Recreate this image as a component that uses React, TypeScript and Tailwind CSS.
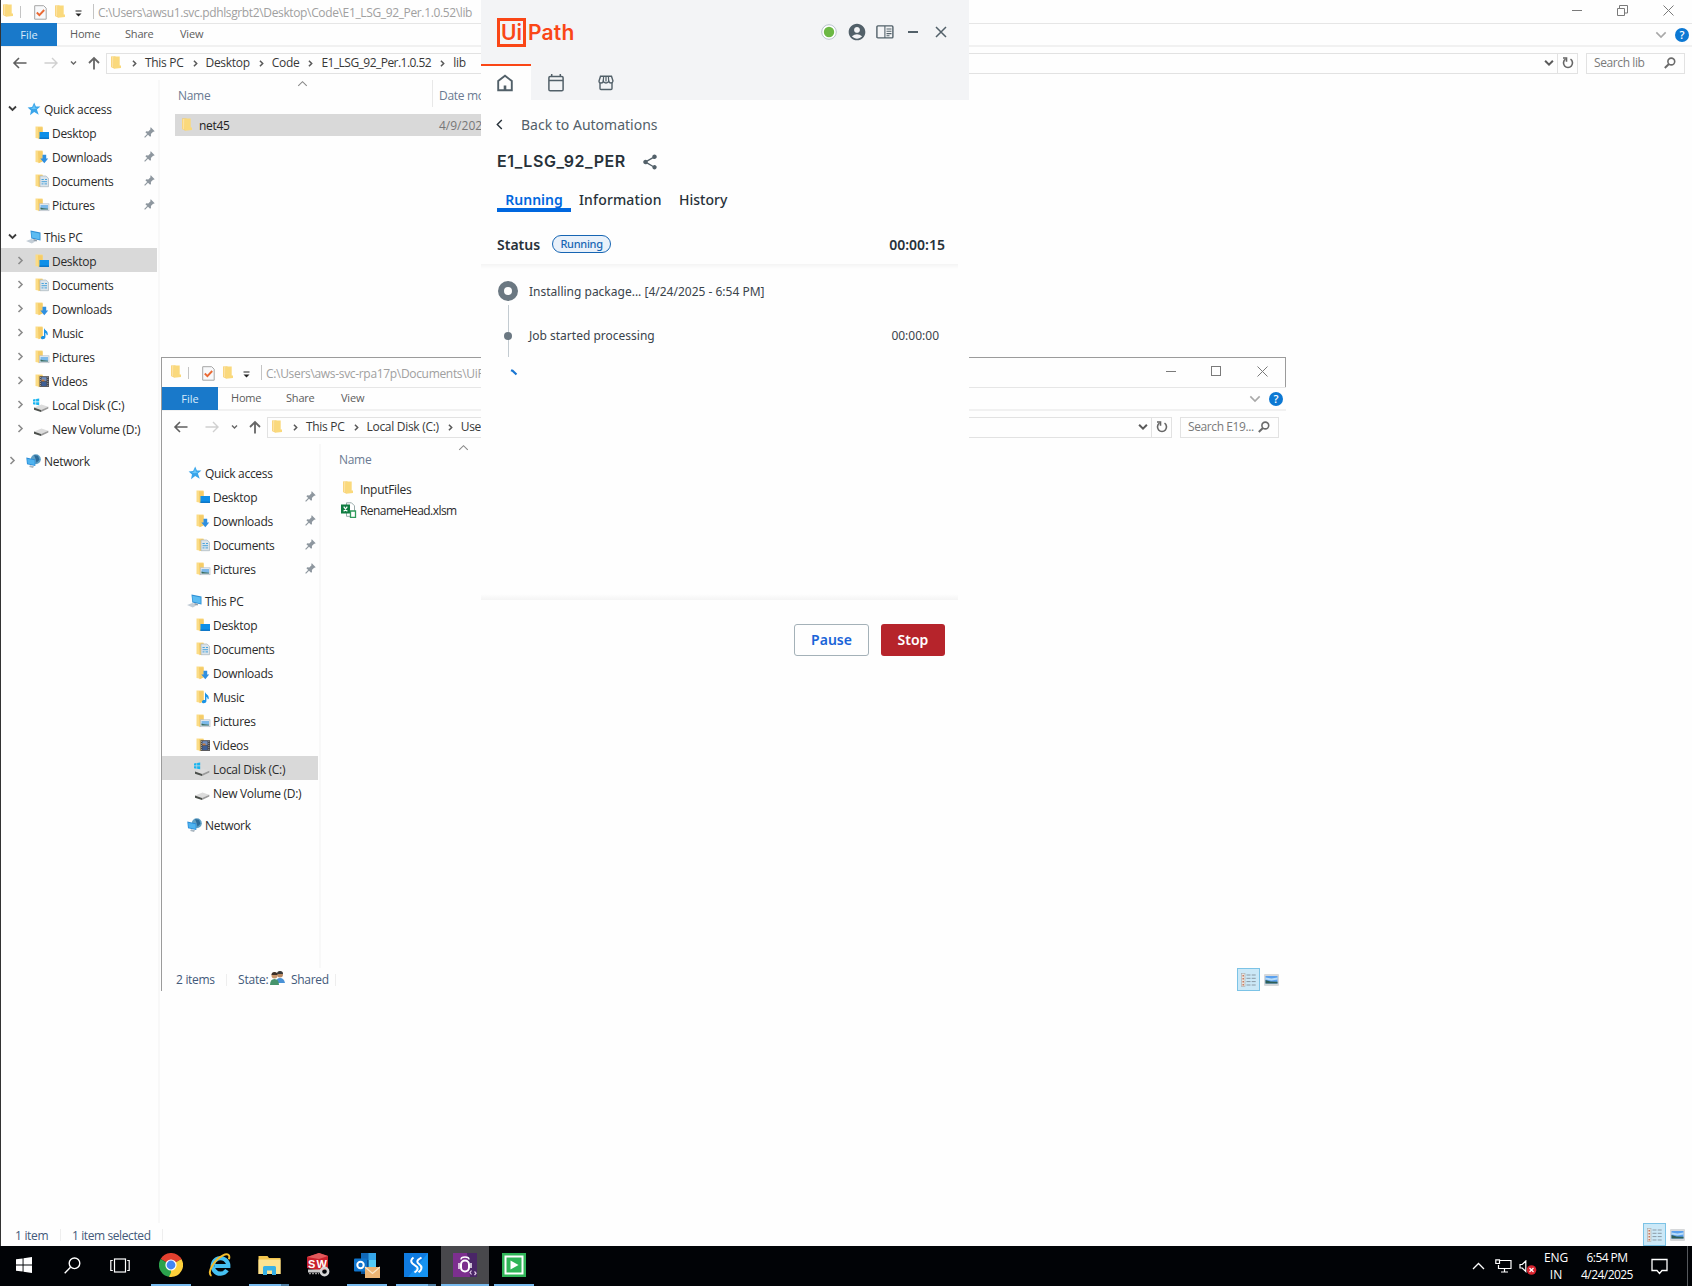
import React from "react";
import { MdAccountCircle, MdShare } from "react-icons/md";

type Kind =
  | "star" | "pc" | "net" | "desktop" | "downloads" | "documents"
  | "pictures" | "music" | "videos" | "disk" | "drive";

function Folder({ className = "" }: { className?: string }) {
  return (
    <svg width="10" height="13" viewBox="0 0 10 13" className={"shrink-0 " + className}>
      <path d="M0 .5h4.500v10.500L3 12.500 0 11z" fill="#f4c75e" />
      <path d="M2.500 .6h6.200v9H10V12l-7 .7z" fill="#fad97c" />
      <path d="M.5 1h2v11l-2-1z" fill="#fde3a0" />
    </svg>
  );
}

function NavIcon({ kind }: { kind: Kind }) {
  const base = (
    <>
      <path d="M.5.5h7v10.300l-3 1.900-4-.7z" fill="#fbdc86" />
      <path d="M3 1.200h4.700v10.300L3.500 13.200z" fill="#f5cc68" />
    </>
  );
  return (
    <svg width="16" height="14" viewBox="0 0 16 14" className="shrink-0">
      {kind === "star" && (
        <>
          <path d="M8.200.4l1.700 4.200 4.500-.2-3.500 3.100 1.800 5.300-4.500-2.700-4.200 3.200 1-4.900L1.600 5.600l4.500-.7z" fill="#3aa5ea" />
          <path d="M8 2.500l1 3.200 3.200.2-4.400 1.300-3-.7 2.400-.9z" fill="#6cc8f8" />
        </>
      )}
      {kind === "pc" && (
        <>
          <path d="M4.500.5L14.500 2.600v8L5.300 8.500z" fill="#2f8fd4" />
          <path d="M5.300 1.700l8.300 1.900v5.800L5.900 7.600z" fill="#5cbcf2" />
          <path d="M0 11l5.400-2.100 5.600 1.600L5.800 13.400z" fill="#c3cdd6" />
          <path d="M7.500 9.100l3.500 1-.4 1.300-3-.9z" fill="#8f9aa5" />
        </>
      )}
      {kind === "net" && (
        <>
          <circle cx="9.800" cy="5.200" r="5" fill="#5f9fc4" />
          <path d="M8 1l4 .8 1.500 4-3 3-1-4z" fill="#2c6b99" />
          <path d="M.3 3.600l9 1.800v6.700L1 10.200z" fill="#2a8dd8" />
          <path d="M1.200 4.700l7.400 1.500v4.700L1.700 9.400z" fill="#4fb3ef" />
          <path d="M4 11.300l4 1-1 1.600-3.800-.8z" fill="#a9b6c0" />
        </>
      )}
      {kind === "desktop" && (
        <>
          {base}
          <rect x="4.500" y="6" width="9.500" height="6.700" fill="#0f8fe8" />
          <rect x="4.500" y="11.600" width="9.500" height="1.300" fill="#0872c4" />
        </>
      )}
      {kind === "downloads" && (
        <>
          {base}
          <path d="M7.500 4.800h3.700v3.700h2L9.300 13.200 5.300 8.500h2.200z" fill="#2f8fe0" />
        </>
      )}
      {kind === "documents" && (
        <>
          {base}
          <path d="M5 2h6l2.500 2.300V12.700H5z" fill="#dbe4ea" stroke="#a9b4bc" strokeWidth=".7" />
          <path d="M6.500 5.500h2.300M10 5.500h2M6.500 7.700h5.500M6.500 9.900h2M9.500 9.900h2.500" stroke="#4aa3dc" strokeWidth="1" />
        </>
      )}
      {kind === "pictures" && (
        <>
          {base}
          <rect x="4.500" y="5.800" width="9.500" height="6.900" fill="#e9eef2" stroke="#b5bec6" strokeWidth=".7" />
          <rect x="5.500" y="7" width="7.500" height="4.400" fill="#7db9ea" />
          <path d="M5.500 11.400V9.400l2.500.8 5 .5v.7z" fill="#3b6a58" />
        </>
      )}
      {kind === "music" && (
        <>
          {base}
          <path d="M9 2c1 2.700 4.300 2.700 3.700 7l-1 .3c0-1.500-.5-2.100-1.300-2.600v4.600c0 2.200-4.500 2.700-4.500.6 0-1.700 1.900-2.200 3.100-1.800z" fill="#1a93e6" />
        </>
      )}
      {kind === "videos" && (
        <>
          {base}
          <rect x="4.500" y="2.200" width="9.500" height="10.700" fill="#4a4a4e" />
          <rect x="6.500" y="3.200" width="5" height="4" fill="#6f8fc2" />
          <rect x="6.500" y="8" width="5" height="4" fill="#3e5f96" />
          <path d="M6.500 5.500h3v1.700h-3z" fill="#c67a3c" />
          <path d="M5.500 3v9.500M12.800 3v9.500" stroke="#aaa" strokeWidth=".8" strokeDasharray="1 1" />
        </>
      )}
      {(kind === "disk" || kind === "drive") && (
        <>
          <path d="M1 9.500L8.500 6.500l6.800 2.200L8 12z" fill="#dcdcdc" />
          <path d="M1 9.500l7 2.500v2L1 11.700z" fill="#4b4f4b" />
          <path d="M8 12l7.300-3.300v1.800L8 14z" fill="#9a9a9a" />
        </>
      )}
      {kind === "disk" && (
        <path d="M0 1.500l2.500-.4v2.500H0zM3.100 1l3.100-.4v3H3.100zM0 4.200h2.500v2.500L0 6.300zM3.100 4.200h3.100v3l-3.100-.4z" fill="#17b4f0" />
      )}
    </svg>
  );
}

function Pin() {
  return (
    <svg width="11" height="11" viewBox="0 0 11 11">
      <path d="M6.800.3l3.900 3.900-1 .6-.6-.1-2.200 2.200.1 2-.9.900L1.400 5.200l.9-.9 2 .1L6.500 2.200 6.300 1z" fill="#8e979f" />
      <path d="M3.800 7.200L.6 10.400" stroke="#8e979f" strokeWidth="1.200" />
    </svg>
  );
}

function Chev({ dir, color = "#5a5a5a", size = 8, sw = 1.6 }: { dir: "r" | "d" | "u" | "l"; color?: string; size?: number; sw?: number }) {
  const d = { r: "M2.500 1l3.500 3.500L2.500 8", d: "M1 2.500l3.500 3.500L8 2.500", u: "M1 6.500L4.500 3 8 6.500", l: "M6.500 1L3 4.500 6.500 8" }[dir];
  return (
    <svg width={size} height={size} viewBox="0 0 9 9" fill="none" stroke={color} strokeWidth={sw} className="shrink-0">
      <path d={d} />
    </svg>
  );
}

interface NavRow { label: string; icon: Kind; level: 0 | 1; pin?: boolean; open?: boolean; gap?: boolean }

const quick: NavRow[] = [
  { label: "Quick access", icon: "star", level: 0, open: true },
  { label: "Desktop", icon: "desktop", level: 1, pin: true },
  { label: "Downloads", icon: "downloads", level: 1, pin: true },
  { label: "Documents", icon: "documents", level: 1, pin: true },
  { label: "Pictures", icon: "pictures", level: 1, pin: true },
];
const pc: NavRow[] = [
  { label: "This PC", icon: "pc", level: 0, open: true, gap: true },
  { label: "Desktop", icon: "desktop", level: 1 },
  { label: "Documents", icon: "documents", level: 1 },
  { label: "Downloads", icon: "downloads", level: 1 },
  { label: "Music", icon: "music", level: 1 },
  { label: "Pictures", icon: "pictures", level: 1 },
  { label: "Videos", icon: "videos", level: 1 },
  { label: "Local Disk (C:)", icon: "disk", level: 1 },
  { label: "New Volume (D:)", icon: "drive", level: 1 },
  { label: "Network", icon: "net", level: 0, gap: true },
];

function Sidebar({ selected, arrows }: { selected: string; arrows: boolean }) {
  const render = (r: NavRow, inPc: boolean) => {
    const sel = inPc && r.label === selected;
    const disk = r.icon === "disk" || r.icon === "drive";
    return (
      <div key={(inPc ? "p" : "q") + r.label} className={"flex h-6 w-[156px] items-center " + (r.gap ? "mt-2 " : "") + (sel ? "bg-[#d9d9d9]" : "")}>
        <div className={"flex shrink-0 items-center pt-px " + (r.level === 0 ? "w-[25px] pl-[7px]" : disk ? "w-8 pl-[15px]" : "w-[34px] pl-[15px]")}>
          {arrows && !(r.level === 1 && !inPc) && (
            <Chev dir={r.open ? "d" : "r"} color={r.open ? "#3c3c3c" : "#8c8c8c"} size={9} sw={r.open ? 1.8 : 1.6} />
          )}
        </div>
        <div className={"flex shrink-0 pt-px " + (disk ? "w-[19px]" : r.level === 0 ? "w-[18px]" : "w-[17px]")}>
          <NavIcon kind={r.icon} />
        </div>
        <span className="flex-1 whitespace-nowrap pt-[3px]">{r.label}</span>
        {r.pin && <span className="mr-[2px]"><Pin /></span>}
      </div>
    );
  };
  return (
    <div className="flex w-[159px] shrink-0 flex-col border-r-2 border-[#f8f8f8] pt-4 text-[#2b2b2b]">
      {quick.map((r) => render(r, false))}
      {pc.map((r) => render(r, true))}
    </div>
  );
}

function Sep({ className = "" }: { className?: string }) {
  return <span className={"w-px shrink-0 " + className} />;
}

function SearchGlyph() {
  return (
    <svg width="12" height="12" viewBox="0 0 12 12" fill="none" stroke="#6b6b6b" strokeWidth="1.600" className="shrink-0">
      <circle cx="7.300" cy="4.500" r="3.400" />
      <path d="M4.900 7L.8 11" strokeWidth="2" />
    </svg>
  );
}

interface WinProps {
  title: string; main?: boolean; crumbs: { text: string; cls: string }[]; search: string;
  selected: string; children: React.ReactNode; status: React.ReactNode;
}

function Explorer({ title, main, crumbs, search, selected, children, status }: WinProps) {
  return (
    <div className="flex h-full w-full flex-col overflow-hidden bg-[#fefefe] tracking-[-0.3px]">
      <div className={"flex shrink-0 items-center " + (main ? "h-[23px] border-l border-[#333] pl-[2px]" : "h-[30px] border-x border-t border-[#9b9b9b] pl-[9px]")}>
        <Folder className="-mt-[2px]" />
        <Sep className="ml-[7px] h-3 bg-[#c4c4c4]" />
        <svg width="13" height="15" viewBox="0 0 13 15" className="ml-[13px] mt-[2px]">
          <path d="M.7.7h9l2.500 2.500v11H.7z" fill="#f8f9fb" stroke="#a6a6a6" />
          <path d="M2.800 7.500l2.600 2.700L10.200 5" fill="none" stroke="#ea6a35" strokeWidth="1.900" />
        </svg>
        <Folder className="ml-[8px]" />
        <svg width="7" height="8" viewBox="0 0 7 8" className="ml-[10px] mt-[4px]">
          <path d="M.5 1h6" stroke="#444" strokeWidth="1.200" />
          <path d="M.5 3.500h6l-3 3z" fill="#222" />
        </svg>
        <Sep className="ml-[11px] h-[15px] bg-[#c4c4c4]" />
        <span className={"ml-1 flex-1 whitespace-nowrap pt-[2px] text-[#a0a0a0] " + (main ? "tracking-[-0.36px]" : "tracking-[-0.32px]")}>{title}</span>
        <div className={"flex shrink-0 items-center gap-[35px] pb-[2px] " + (main ? "mr-[18px]" : "mr-[17px]")}>
          <span className="h-px w-[10px] bg-[#7a7a7a]" />
          <svg width="11" height="11" viewBox="0 0 11 11" fill="none" stroke="#7a7a7a">
            {main ? <path d="M.5 3.500h7v7h-7zM2.500 3.500V.5h8v7.500H7.500" /> : <rect x=".5" y=".5" width="9" height="9" />}
          </svg>
          <svg width="11" height="11" viewBox="0 0 11 11" stroke="#7a7a7a"><path d="M.5.5l10 10M10.500.5l-10 10" /></svg>
        </div>
      </div>
      <div className={"flex min-h-0 flex-1 flex-col border-l " + (main ? "border-[#333]" : "border-[#9b9b9b]")}>
        <div className="flex h-[24px] shrink-0 items-center border-b-2 border-t border-b-[#f1f1f1] border-t-[#e6e6e6] text-[11px] tracking-[-0.2px] text-[#5c5c5c]">
          <span className="-mt-px flex h-[23px] w-14 items-center justify-center bg-[#1979ca] pt-px tracking-normal text-[#d8ebfa]">File</span>
          <span className="ml-[13px] w-[55px] pb-px">Home</span>
          <span className="w-[55px] pb-px">Share</span>
          <span className="flex-1 pb-px">View</span>
          <Chev dir="d" color="#a8a8a8" size={12} sw={1.2} />
          <span className="ml-2 mr-[3px] flex h-[14px] w-[14px] items-center justify-center rounded-full bg-[#0c78d3] text-[11px] font-semibold leading-none text-white">?</span>
        </div>
        <div className="flex h-[31px] shrink-0 items-center pt-px">
          <svg width="90" height="14" viewBox="0 0 90 14" fill="none" className="ml-[11px] mr-[4px]">
            <path d="M14.500 7H2M7 2L2 7l5 5" stroke="#5f5f5f" strokeWidth="1.600" />
            <path d="M32.500 7H44.500M40 2l5 5-5 5" stroke="#d0d0d0" strokeWidth="1.400" />
            <path d="M59 5.500l2.500 2.500L64 5.500" stroke="#666" strokeWidth="1.400" />
            <path d="M82 13.500V2M77 7l5-5 5 5" stroke="#666" strokeWidth="1.800" />
          </svg>
          <div className="flex h-[21px] min-w-0 flex-1 items-center border border-[#e2e2e2] text-[#383838]">
            <Folder className="-mt-[2px] ml-1 mr-[2px]" />
            {crumbs.map((c) => (
              <React.Fragment key={c.text}>
                <span className="ml-2 mr-[7px] flex"><Chev dir="r" size={7} sw={2} /></span>
                <span className={"whitespace-nowrap " + c.cls}>{c.text}</span>
              </React.Fragment>
            ))}
            <span className="flex-1" />
            <span className="mr-[3px]"><Chev dir="d" size={10} sw={1.8} /></span>
            <span className="flex h-full w-5 items-center justify-center border-l border-[#e2e2e2]">
              <svg width="12" height="12" viewBox="0 0 12 12" fill="none" stroke="#666" strokeWidth="1.600">
                <path d="M8.500 2.200A4.500 4.500 0 1 1 3.500 2.200" />
                <path d="M1 1h3.500v3.800" />
              </svg>
            </span>
          </div>
          <div className="ml-2 mr-[7px] flex h-[21px] w-[99px] items-center justify-between border border-[#e2e2e2] pl-[7px] pr-2 text-[#7a7a7a]">
            <span className="whitespace-nowrap tracking-[-0.4px]">{search}</span>
            <SearchGlyph />
          </div>
        </div>
        <div className="flex min-h-0 flex-1 pt-[2px]">
          <Sidebar selected={selected} arrows={!!main} />
          <div className="min-w-0 flex-1">{children}</div>
        </div>
        <div className="flex h-[23px] shrink-0 items-center text-[#42597a]">
          {status}
          <span className="flex-1" />
          <div className="mr-1 flex h-full w-[23px] items-center justify-center border border-[#7cc3e6] bg-[#cbe8f7]">
            <svg width="15" height="14" viewBox="0 0 15 14">
              <rect x=".5" y=".5" width="3.500" height="13" fill="#e9e4e0" stroke="#aaa" strokeWidth=".6" />
              <path d="M2.200 2v1.500M2.200 5v1.500M2.200 8v1.500M2.200 11v1.500" stroke="#c46a4a" strokeWidth="1.300" />
              <path d="M5.500 2h4M10.700 2h4M5.500 5.300h4M10.700 5.300h4M5.500 8.600h4M10.700 8.600h4M5.500 12h4M10.700 12h4" stroke="#8b9aa5" />
            </svg>
          </div>
          <svg width="15" height="12" viewBox="0 0 15 12" className="mr-[7px]">
            <rect width="15" height="12" rx="1" fill="#d6d8da" />
            <rect x="1.500" y="2" width="12" height="7.500" fill="#5aa0ee" />
            <path d="M1.500 3.500l6 1 6-1v2l-6 1-6-1z" fill="#b8dcf8" />
            <path d="M1.500 6l5 1.500 7 .2v1.800h-12z" fill="#2e5e56" />
          </svg>
        </div>
      </div>
    </div>
  );
}

function UiPathPanel() {
  return (
    <div className="flex h-full w-full flex-col bg-[#fefefe] font-['Noto_Sans',sans-serif] text-[#273139]">
      <div className="flex h-[100px] shrink-0 flex-col bg-[#f3f4f6]">
        <div className="flex h-16 items-center pl-4 pr-[22px]">
          <div className="flex items-center font-['Inter',sans-serif] text-[#fa4616]">
            <span className="flex h-[29px] w-[29px] items-center justify-center border-[3px] border-[#fa4616] text-[21px] font-semibold leading-none">Ui</span>
            <span className="ml-[2px] text-[21px] font-semibold leading-none tracking-[0.2px]">Path</span>
          </div>
          <span className="flex-1" />
          <div className="flex items-center text-[#526069]">
            <svg width="16" height="16" viewBox="0 0 16 16"><circle cx="8" cy="8" r="7.300" fill="#fff" stroke="#b9c4cb" /><circle cx="8" cy="8" r="5.200" fill="#6cb844" /></svg>
            <MdAccountCircle className="ml-[10px]" size={20} />
            <svg width="18" height="14" viewBox="0 0 18 14" fill="none" stroke="currentColor" strokeWidth="1.400" className="ml-[9px]">
              <rect x=".9" y=".9" width="16" height="12" rx="1" />
              <path d="M8.900 1v12M10.500 4h5M10.500 6.300h5M10.500 8.600h5M10.500 10.700h3" strokeWidth="1.100" />
            </svg>
            <span className="ml-[14px] h-[1.500px] w-[10px] bg-[#526069]" />
            <svg width="12" height="12" viewBox="0 0 12 12" stroke="currentColor" strokeWidth="1.500" className="ml-[17px]"><path d="M1 1l10 10M11 1L1 11" /></svg>
          </div>
        </div>
        <div className="flex h-9">
          <div className="flex w-[50px] items-center justify-center border-t-2 border-[#fa4616] bg-[#fefefe] pr-[2px]">
            <svg width="16" height="18" viewBox="0 0 16 18" fill="none" stroke="#526069" strokeWidth="1.900"><path d="M1.200 16.200V7L8 1.800 14.800 7v9.200z" /><path d="M8 11.500v5" strokeWidth="2.600" /></svg>
          </div>
          <div className="flex w-[50px] items-center justify-center pt-[2px]">
            <svg width="16" height="18" viewBox="0 0 16 18" fill="none" stroke="#526069" strokeWidth="1.500"><rect x=".9" y="2.500" width="14.200" height="14.200" rx="1.300" /><path d="M1 6.500h14M3.700 0v3M12.300 0v3" /></svg>
          </div>
          <div className="flex w-[50px] items-center justify-center pt-[2px]">
            <svg width="16" height="16" viewBox="0 0 16 16" fill="none" stroke="#526069" strokeWidth="1.400"><path d="M2 8v5.500q0 1 1 1h10q1 0 1-1V8" /><path d="M2.500 1.300h11L15 6q-.3 2-2 2t-2.300-1.700Q10 8 8 8T5.300 6.300Q5 8 3 8T1 6z" /><path d="M5.600 1.500l-.3 5M8 1.500v5M10.400 1.500l.3 5" strokeWidth="1.200" /></svg>
          </div>
        </div>
      </div>
      <div className="flex h-[50px] items-center pl-[15px]">
        <svg width="7" height="11" viewBox="0 0 7 11" fill="none" stroke="#273139" strokeWidth="1.400" className="-mt-px"><path d="M5.800 1L1.300 5.500 5.800 10" /></svg>
        <span className="ml-[18px] text-sm text-[#526069]">Back to Automations</span>
      </div>
      <div className="flex h-[22px] items-center pl-4">
        <span className="w-[144px] whitespace-nowrap font-['Inter',sans-serif] text-base font-semibold tracking-[0.55px]">E1_LSG_92_PER</span>
        <MdShare size={18} color="#526069" className="mt-[2px]" />
      </div>
      <div className="mt-4 flex h-6 pl-4 text-sm font-medium">
        <span className="flex w-[74px] justify-center border-b-4 border-[#0067df] pt-[2px] font-semibold text-[#0067df]">Running</span>
        <span className="ml-2 w-[100px] pt-[2px] tracking-[0.15px]">Information</span>
        <span className="pt-[2px]">History</span>
      </div>
      <div className="flex h-[52px] items-center pl-4 pr-6 pt-[14px] text-sm font-semibold">
        <span>Status</span>
        <span className="-mt-[3px] ml-3 flex h-[18px] w-[59px] items-center justify-center rounded-full border border-[#1665b3] bg-[#e9f1fa] text-[11px] font-medium tracking-[-0.3px] text-[#1665b3]">Running</span>
        <span className="flex-1" />
        <span>00:00:15</span>
      </div>
      <div className="flex h-[336px] w-[477px] flex-col justify-between">
        <div className="flex flex-col">
          <div className="h-[5px] bg-linear-to-b from-[#f4f4f4] to-[#fefefe]" />
          <div className="flex pl-[17px] pt-3 text-xs text-[#3a444c]">
            <div className="flex w-5 flex-col items-center">
              <span className="h-5 w-5 rounded-full border-[6px] border-[#6b7882]" />
              <span className="ml-px mt-[4px] h-[27px] w-px bg-[#c3cbd1]" />
              <span className="h-2 w-2 rounded-full bg-[#6b7882]" />
              <span className="ml-px h-[17px] w-px bg-[#c3cbd1]" />
              <svg width="8" height="7" viewBox="0 0 8 7" className="ml-[12px] mt-3"><path d="M1 1.200l1.500.6L6.500 5.500" fill="none" stroke="#1976d2" strokeWidth="2.200" /></svg>
            </div>
            <div className="ml-[11px] flex flex-1 flex-col pr-[19px]">
              <div className="flex h-[21px] items-center whitespace-nowrap">Installing package... [4/24/2025 - 6:54 PM]</div>
              <div className="mt-[23px] flex h-[21px] items-center justify-between"><span>Job started processing</span><span>00:00:00</span></div>
            </div>
          </div>
        </div>
        <div className="h-[6px] bg-linear-to-b from-[#fefefe] to-[#f4f4f4]" />
      </div>
      <div className="mt-[24px] flex justify-end gap-3 pr-6 text-sm font-semibold">
        <span className="flex h-8 w-[75px] items-center justify-center rounded-[3px] border border-[#a4b1b8] text-[#1a64d8]">Pause</span>
        <span className="flex h-8 w-16 items-center justify-center rounded-[3px] bg-[#b6242b] text-white">Stop</span>
      </div>
    </div>
  );
}

function Slot({ active, line, children }: { active?: boolean; line?: "full" | "split" | "wide"; children: React.ReactNode }) {
  return (
    <div className={"mr-px flex h-full w-12 flex-col items-center " + (active ? "bg-[#48484c]" : "")}>
      <div className="flex flex-1 items-center">{children}</div>
      <div className={"flex h-[2px] " + (line === "wide" ? "w-full" : "w-10")}>
        {line && <span className="flex-1 bg-[#76b9ed]" />}
        {line === "split" && <span className="w-2 bg-[#4f7fa5]" />}
      </div>
    </div>
  );
}

function Taskbar() {
  return (
    <div className="flex h-10 w-full items-stretch bg-[#010306] text-white">
      <Slot><svg width="16" height="16" viewBox="0 0 16 16" fill="#fff"><path d="M0 2.300l6.600-.9v6.100H0zM7.500 1.200L16 0v7.500H7.500zM0 8.500h6.600v6.100L0 13.700zM7.500 8.500H16V16l-8.500-1.200z" /></svg></Slot>
      <Slot><svg width="17" height="17" viewBox="0 0 17 17" fill="none" stroke="#fff" strokeWidth="1.400" className="mr-[2px]"><circle cx="10.500" cy="6.300" r="5.300" /><path d="M6.500 10.200L.7 16.200" /></svg></Slot>
      <Slot><svg width="20" height="15" viewBox="0 0 20 15" fill="none" stroke="#fff" strokeWidth="1.200" className="mr-[4px]"><rect x="4.500" y="1" width="11" height="13" /><path d="M2.800 2.500H.8v10h2M17.200 2.500h2v10h-2" /></svg></Slot>
      <Slot line="full">
        <svg width="24" height="24" viewBox="0 0 24 24">
          <path d="M12 12L1.600 6A12 12 0 0 1 22.400 6z" fill="#e2402f" />
          <path d="M12 12L22.400 6A12 12 0 0 1 12 24z" fill="#fdd03b" />
          <path d="M12 12v0L12 24A12 12 0 0 1 1.600 6z" fill="#2ba24c" />
          <path d="M12 6.500h10.700A12 12 0 0 0 21 4z" fill="#e2402f" />
          <path d="M17 14.500L12 24a12 12 0 0 1-2-.2l3-6z" fill="#fdd03b" />
          <circle cx="12" cy="12" r="5.600" fill="#fff" /><circle cx="12" cy="12" r="4.400" fill="#4285f4" />
        </svg>
      </Slot>
      <Slot>
        <svg width="24" height="24" viewBox="0 0 24 24" fill="none">
          <path d="M19 17.200a7.800 7.800 0 1 1 1.300-4.200H7" stroke="#45c1f2" strokeWidth="4.200" />
          <path d="M3.500 22.800C-1.500 20.500 5.500 7 15 2.300c5-2.300 7.300-.3 5.900 3.900" stroke="#f4bd2c" strokeWidth="2" />
        </svg>
      </Slot>
      <Slot line="split">
        <svg width="23" height="20" viewBox="0 0 23 20">
          <path d="M.5 1h9l1.500 2h11.500v16H.5z" fill="#f3c64e" /><path d="M.5 4.500h22V19H.5z" fill="#fde391" />
          <path d="M5 20v-7.500q0-1.500 1.500-1.500h10q1.500 0 1.500 1.500V20h-4v-4.500H9V20z" fill="#38b1e6" />
        </svg>
      </Slot>
      <Slot>
        <svg width="24" height="24" viewBox="0 0 24 24">
          <path d="M1 4L13 0l9 3v13l-9 2-12-3z" fill="#c9202b" /><path d="M1 4L13 0l9 3-9 3z" fill="#e25a5c" />
          <text x="2" y="14.500" fontSize="11" fontWeight="700" fill="#fff" fontFamily="Liberation Sans" textLength="19">SW</text>
          <path d="M2 18h14" stroke="#c9c9c9" strokeWidth="3" /><path d="M3 20.500h10" stroke="#999" strokeWidth="1.500" strokeDasharray="2 1" />
          <circle cx="18.500" cy="18.500" r="3.600" fill="none" stroke="#d6d6d6" strokeWidth="2.600" />
        </svg>
      </Slot>
      <Slot line="full">
        <svg width="26" height="26" viewBox="0 0 26 26">
          <path d="M7 1h15v14H7z" fill="#1068b8" /><path d="M14.500 1H22v7h-7.500z" fill="#35a5e8" /><path d="M14.500 8H22v7h-7.500z" fill="#55cdf8" /><path d="M7 8h7.500v14H7z" fill="#0a4f92" />
          <rect y="6.500" width="13" height="13" rx="1" fill="#0f74cc" /><circle cx="6.500" cy="13" r="3.200" fill="none" stroke="#fff" strokeWidth="2" />
          <rect x="11" y="15" width="15" height="11" fill="#eeb574" /><path d="M11 15l7.500 6.500L26 15" fill="none" stroke="#fbe5c6" strokeWidth="1.300" />
        </svg>
      </Slot>
      <Slot line="split">
        <svg width="24" height="24" viewBox="0 0 24 24">
          <rect width="24" height="24" fill="#0f7be0" /><path d="M24 0v24H4z" fill="#1593f2" />
          <path d="M9.500 4.500q-4 3.200-1 6l4.500 3.500q2 2.500-2.500 5.500M17.500 4.500l-3 2q-2.500 2.300.5 4.500 4 3 1.500 6.500l-2 1.800" fill="none" stroke="#fff" strokeWidth="2" />
        </svg>
      </Slot>
      <Slot active line="wide">
        <svg width="24" height="24" viewBox="0 0 24 24" fill="none">
          <rect width="24" height="24" fill="#7c2f8e" /><path d="M14 0h10v24h-7z" fill="#4a2667" />
          <rect x="8" y="7.500" width="8" height="11" rx="4" stroke="#fff" strokeWidth="2" /><path d="M8 6.500Q8 4 12 4t4 2.500M6 10v6M18 10v5" stroke="#fff" strokeWidth="1.400" />
          <path d="M18.500 17.500l-1.500 2 1.500 2M21.500 18.500l1.500 1.700-1.500 2" stroke="#e4cdea" strokeWidth="1.200" />
        </svg>
      </Slot>
      <Slot line="full">
        <svg width="24" height="24" viewBox="0 0 24 24">
          <rect width="24" height="24" fill="#2fb457" /><rect x="3.500" y="3.500" width="17" height="17" fill="none" stroke="#fff" strokeWidth="2" /><path d="M8.500 7.500l8 4.500-8 4.500z" fill="#fff" />
        </svg>
      </Slot>
      <span className="flex-1" />
      <div className="flex items-center">
        <svg width="13" height="8" viewBox="0 0 13 8" fill="none" stroke="#fff" strokeWidth="1.300"><path d="M1 7l5.500-5.500L12 7" /></svg>
        <svg width="17" height="14" viewBox="0 0 17 14" fill="none" stroke="#fff" strokeWidth="1.200" className="ml-[10px]"><path d="M5 1.500h11v8H3.500V6M9.500 9.500v3.500M6 13h7" /><path d="M.8.8h3.700v3.700H.8z" /></svg>
        <svg width="18" height="16" viewBox="0 0 18 16" className="ml-[7px] mt-1"><path d="M1 4.500h2.200L6.800 1v10.500L3.200 8H1z" fill="none" stroke="#fff" strokeWidth="1.200" /><circle cx="12.500" cy="10" r="4.800" fill="#d9232e" /><path d="M10.500 8l4 4M14.500 8l-4 4" stroke="#fff" strokeWidth="1.200" /></svg>
        <div className="ml-[3px] flex w-8 flex-col items-center leading-[17px]"><span className="tracking-[-0.2px]">ENG</span><span>IN</span></div>
        <div className="ml-[3px] flex w-[64px] flex-col items-center whitespace-nowrap leading-[17px] tracking-[-0.55px]"><span>6:54 PM</span><span>4/24/2025</span></div>
        <svg width="17" height="17" viewBox="0 0 17 17" fill="none" stroke="#fff" strokeWidth="1.300" className="ml-[12px]"><path d="M1 1.500h15v11h-5L8.500 15.500 6 12.500H1z" /></svg>
        <span className="ml-[19px] h-full w-px bg-[#55585c]" /><span className="w-1" />
      </div>
    </div>
  );
}

export default function App() {
  return (
    <div className="relative flex h-[1286px] w-[1692px] flex-col overflow-hidden bg-[#fefefe] font-['Open_Sans',sans-serif] text-[12px] leading-4">
      <div className="min-h-0 flex-1">
        <Explorer
          main
          title={"C:\\Users\\awsu1.svc.pdhlsgrbt2\\Desktop\\Code\\E1_LSG_92_Per.1.0.52\\lib"}
          crumbs={[
            { text: "This PC", cls: "" }, { text: "Desktop", cls: "" }, { text: "Code", cls: "" },
            { text: "E1_LSG_92_Per.1.0.52", cls: "tracking-[-0.53px]" }, { text: "lib", cls: "" },
          ]}
          search="Search lib"
          selected="Desktop"
          status={<><span className="ml-[14px] w-[45px] pt-[2px]">1 item</span><Sep className="h-3 bg-[#eee]" /><span className="ml-[11px] w-[90px] whitespace-nowrap pt-[2px] tracking-[-0.4px]">1 item selected</span><Sep className="h-3 bg-[#eee]" /></>}
        >
          <div className="flex h-[34px] pl-[18px] text-[#6a7a92]">
            <span className="w-[119px] pt-2">Name</span>
            <span className="-mt-[2px] flex w-[135px]"><Chev dir="u" size={11} sw={0.9} color="#8a8a8a" /></span>
            <span className="h-[27px] whitespace-nowrap border-l border-[#e8e8e8] pl-[6px] pt-2">Date modified</span>
          </div>
          <div className="ml-[15px] flex h-[22px] w-[700px] items-center bg-[#d9d9d9] pl-[7px] text-[#222]">
            <Folder className="-mt-[2px]" /><span className="ml-[7px] w-[240px] pt-[2px]">net45</span><span className="pt-[2px] tracking-normal text-[#777]">4/9/2025</span>
          </div>
        </Explorer>
      </div>
      <Taskbar />
      <div className="absolute left-[161px] top-[357px] h-[634px] w-[1125px]">
        <Explorer
          title={"C:\\Users\\aws-svc-rpa17p\\Documents\\UiPath"}
          crumbs={[{ text: "This PC", cls: "" }, { text: "Local Disk (C:)", cls: "" }, { text: "Users", cls: "" }]}
          search="Search E19..."
          selected="Local Disk (C:)"
          status={<><span className="ml-[14px] w-[50px] pt-px">2 items</span><Sep className="h-3 bg-[#eee]" /><span className="ml-[11px] w-8 pt-px tracking-[-0.2px]">State:</span>
            <svg width="15" height="14" viewBox="0 0 15 14" className="-mt-1"><circle cx="10" cy="3.500" r="3" fill="#b98a64" /><path d="M7 3q0-3 3-3t3 3z" fill="#3a3a3a" /><path d="M6 12q0-5 4-5t5 5z" fill="#4a92d6" /><circle cx="4.500" cy="4.500" r="3" fill="#c9966c" /><path d="M1.500 4q0-3 3-3t3 3z" fill="#3d3028" /><path d="M0 14q0-6 4.500-6T9 14z" fill="#46946c" /></svg>
            <span className="ml-[6px] w-[44px] pt-px">Shared</span><Sep className="h-3 bg-[#eee]" /></>}
        >
          <div className="flex h-[34px] pl-[18px] text-[#6a7a92]">
            <span className="w-[119px] pt-2">Name</span><span className="-mt-[2px]"><Chev dir="u" size={11} sw={0.9} color="#8a8a8a" /></span>
          </div>
          <div className="ml-[22px] flex h-[21px] items-center text-[#2b2b2b]"><Folder className="-mt-[2px]" /><span className="ml-[7px] pt-[2px]">InputFiles</span></div>
          <div className="ml-[20px] flex h-[21px] items-center text-[#2b2b2b]">
            <svg width="16" height="16" viewBox="0 0 16 16"><path d="M5.500.8h5l3 3v10.500h-8z" fill="#fff" stroke="#9aa" /><rect y="2.500" width="9" height="9" fill="#107c41" /><path d="M2.700 4.700l3.600 4.600M6.300 4.700L2.700 9.300" stroke="#fff" strokeWidth="1.200" /><path d="M9.500 9h5v6.300h-5z" fill="#fff" stroke="#2f9a5c" strokeWidth="1.300" /></svg>
            <span className="ml-[3px] pt-[2px] tracking-[-0.55px]">RenameHead.xlsm</span>
          </div>
        </Explorer>
      </div>
      <div className="absolute left-[481px] top-0 h-[680px] w-[488px]"><UiPathPanel /></div>
    </div>
  );
}
